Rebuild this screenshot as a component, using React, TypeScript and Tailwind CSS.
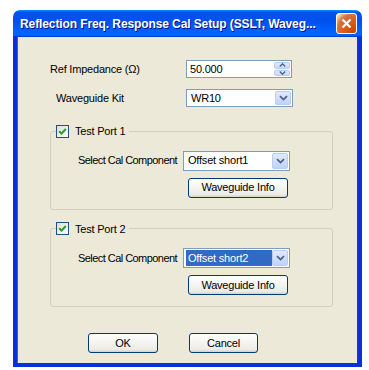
import React from "react";

const ui = "font-['Liberation_Sans',Arial,sans-serif] text-[11px] tracking-[-0.2px] text-black";

function Chevron() {
  return (
    <svg width="9" height="6" viewBox="0 0 9 6">
      <path d="M1 1.2 L4.5 4.6 L8 1.2" fill="none" stroke="#4D6185" strokeWidth="1.8" />
    </svg>
  );
}

function DropButton() {
  return (
    <div className="flex h-full w-[16px] items-center justify-center rounded-[2px] border border-[#B9CCF4] bg-[linear-gradient(180deg,#E1EAFE,#C0D2FA)]">
      <Chevron />
    </div>
  );
}

function Combo({ value, selected, h }: { value: string; selected?: boolean; h: string }) {
  return (
    <div className={`flex ${h} w-[107px] items-stretch border border-[#7F9DB9] bg-white p-px`}>
      <div className="flex flex-1 items-center pl-[1px]">
        <span
          className={
            selected
              ? "flex h-full w-[86px] items-center bg-[#316AC5] pl-[2px] text-white"
              : "pl-[2px]"
          }
        >
          {value}
        </span>
      </div>
      <DropButton />
    </div>
  );
}

function Spin({ value }: { value: string }) {
  return (
    <div className="flex h-[18px] w-[106px] items-stretch border border-[#7F9DB9] bg-white p-px">
      <div className="flex flex-1 items-center pl-[2px]">{value}</div>
      <div className="flex w-[16px] flex-col gap-px">
        <div className="flex flex-1 items-center justify-center rounded-[2px] border border-[#B9CCF4] bg-[linear-gradient(180deg,#E1EAFE,#C8D8FB)]">
          <svg width="7" height="4" viewBox="0 0 7 4">
            <path d="M0.8 3.4 L3.5 0.8 L6.2 3.4" fill="none" stroke="#4D6185" strokeWidth="1.4" />
          </svg>
        </div>
        <div className="flex flex-1 items-center justify-center rounded-[2px] border border-[#B9CCF4] bg-[linear-gradient(180deg,#E1EAFE,#C8D8FB)]">
          <svg width="7" height="4" viewBox="0 0 7 4">
            <path d="M0.8 0.6 L3.5 3.2 L6.2 0.6" fill="none" stroke="#4D6185" strokeWidth="1.4" />
          </svg>
        </div>
      </div>
    </div>
  );
}

function Check() {
  return (
    <div className="flex h-[13px] w-[13px] items-center justify-center border border-[#1C5180] bg-[linear-gradient(135deg,#DCDCD7,#FFFFFF)]">
      <svg width="9" height="9" viewBox="0 0 9 9">
        <path d="M1.2 4.3 L3.5 6.6 L7.8 2" fill="none" stroke="#21A121" strokeWidth="2" />
      </svg>
    </div>
  );
}

function XpButton({ label, w }: { label: string; w: string }) {
  return (
    <button
      className={`${w} h-[20px] rounded-[3px] border border-[#003C74] bg-[linear-gradient(180deg,#FFFFFF,#ECEBE5_86%,#D8D0C4)] text-center leading-none`}
    >
      {label}
    </button>
  );
}

function PortGroup({ title, value, selected }: { title: string; value: string; selected?: boolean }) {
  return (
    <fieldset className="ml-[33px] w-[283px] rounded-[3px] border border-[#D0D0BF] pb-[11px] pl-[5px]">
      <legend className="flex items-center gap-[6px] pr-[4px]">
        <Check />
        <span>{title}</span>
      </legend>
      <div className="mt-[11px] flex h-[20px] items-center">
        <span className="ml-[22px] w-[105px] whitespace-nowrap tracking-[-0.55px]">Select Cal Component</span>
        <Combo value={value} selected={selected} h="h-[20px]" />
      </div>
      <div className="mt-[7px] flex">
        <div className="ml-[132px]">
          <XpButton label="Waveguide Info" w="w-[100px]" />
        </div>
      </div>
    </fieldset>
  );
}

export default function App() {
  return (
    <div className={`min-h-[370px] bg-white pl-[13px] pt-[10px] ${ui}`}>
      <div className="flex h-[357px] w-[349px] flex-col">
        <div className="flex h-[27px] items-center justify-between rounded-t-[7px] bg-[linear-gradient(180deg,#0997FF,#0053EE_8%,#0050EE_40%,#0066FF_88%,#0066FF_93%,#005BFF_95%,#003DD7_96%,#003DD7)] pl-[7px] pr-[5px]">
          <span className="whitespace-nowrap font-['Liberation_Sans',Arial,sans-serif] text-[12px] font-bold tracking-[-0.1px] text-white [text-shadow:1px_1px_#0F1089]">
            Reflection Freq. Response Cal Setup (SSLT, Waveg...
          </span>
          <div className="flex h-[21px] w-[21px] items-center justify-center rounded-[3px] border border-white bg-[radial-gradient(circle_at_90%_90%,#CC4600_0%,#DC6527_55%,#CD7546_70%,#FFCCB2_90%,#FFFFFF_100%)]">
            <svg width="11" height="11" viewBox="0 0 11 11">
              <path d="M1.5 1.5 L9.5 9.5 M9.5 1.5 L1.5 9.5" stroke="white" strokeWidth="2.2" />
            </svg>
          </div>
        </div>
        <div className="flex flex-1 flex-col border-x-[4px] border-b-[4px] border-[#0831D9] bg-[#ECE9D8] shadow-[inset_1px_0_#166AEE,inset_-1px_0_#0A42C9]">
          <div className="mt-[23px] flex h-[18px] items-center">
            <span className="ml-[33px] w-[136px]">Ref Impedance (Ω)</span>
            <Spin value="50.000" />
          </div>
          <div className="mt-[11px] flex h-[18px] items-center">
            <span className="ml-[39px] w-[130px]">Waveguide Kit</span>
            <Combo value="WR10" h="h-[18px]" />
          </div>
          <div className="mt-[16px]">
            <PortGroup title="Test Port 1" value="Offset short1" />
          </div>
          <div className="mt-[11px]">
            <PortGroup title="Test Port 2" value="Offset short2" selected />
          </div>
          <div className="mt-[26px] flex">
            <div className="ml-[71px]">
              <XpButton label="OK" w="w-[70px]" />
            </div>
            <div className="ml-[31px]">
              <XpButton label="Cancel" w="w-[69px]" />
            </div>
          </div>
        </div>
      </div>
    </div>
  );
}
